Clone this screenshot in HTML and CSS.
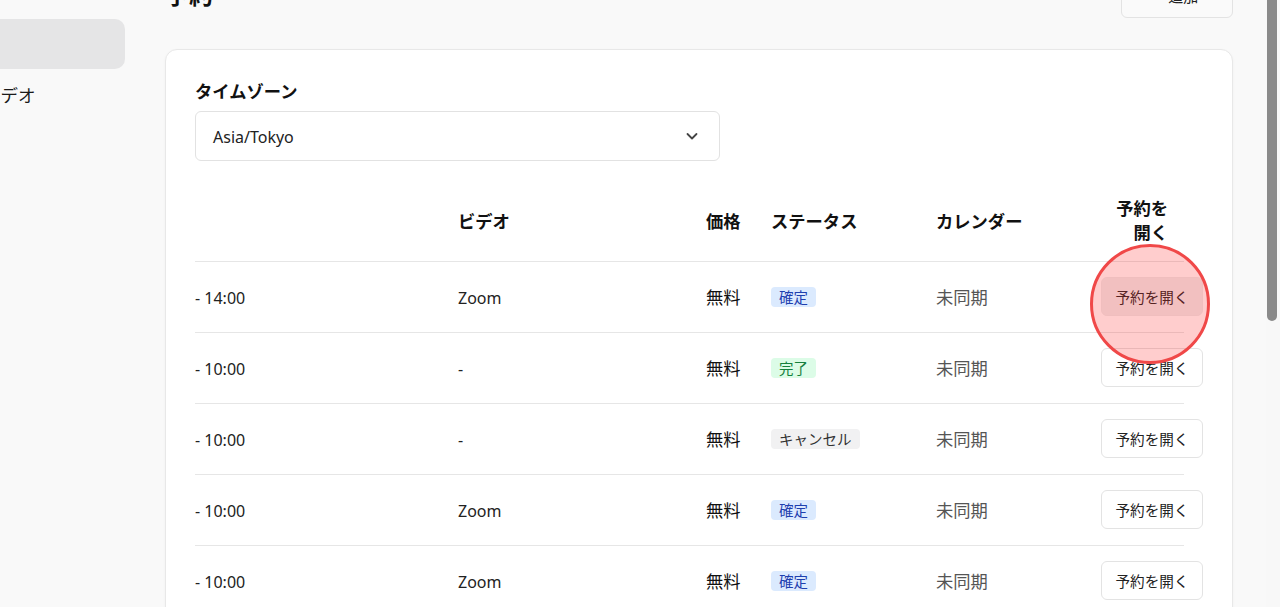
FILE: index.html
```html
<!DOCTYPE html>
<html lang="ja">
<head>
<meta charset="utf-8">
<title>予約</title>
<link rel="stylesheet" href="styles.css">
</head>
<body>
<div class="app">
  <aside class="sidebar">
    <div class="nav-item active">予約</div>
    <div class="nav-item">ビデオ</div>
  </aside>
  <main class="main">
    <header class="page-header">
      <h1 class="title">予約</h1>
      <button class="top-btn">+ 追加</button>
    </header>
    <section class="card">
      <label class="field-label">タイムゾーン</label>
      <div class="select">
        <span class="latin">Asia/Tokyo</span>
        <svg class="chevron" width="14" height="14" viewBox="0 0 14 14"><path d="M2.5 5l4.5 4.5L11.5 5" fill="none" stroke="#444" stroke-width="1.8" stroke-linecap="round" stroke-linejoin="round"/></svg>
      </div>
      <table class="table">
        <colgroup>
          <col class="c-time"><col class="c-video"><col class="c-price"><col class="c-status"><col class="c-cal"><col class="c-act">
        </colgroup>
        <thead>
          <tr>
            <th></th><th>ビデオ</th><th>価格</th><th>ステータス</th><th>カレンダー</th><th class="th-act">予約を<br>開く</th>
          </tr>
        </thead>
        <tbody>
          <tr>
            <td class="latin">- 14:00</td><td class="latin">Zoom</td><td class="price">無料</td>
            <td><span class="badge blue">確定</span></td><td class="cal">未同期</td>
            <td class="act"><span class="btn-wrap"><button class="open-btn hover">予約を開く</button><span class="highlight"></span></span></td>
          </tr>
          <tr>
            <td class="latin">- 10:00</td><td class="latin">-</td><td class="price">無料</td>
            <td><span class="badge green">完了</span></td><td class="cal">未同期</td>
            <td class="act"><button class="open-btn">予約を開く</button></td>
          </tr>
          <tr>
            <td class="latin">- 10:00</td><td class="latin">-</td><td class="price">無料</td>
            <td><span class="badge gray">キャンセル</span></td><td class="cal">未同期</td>
            <td class="act"><button class="open-btn">予約を開く</button></td>
          </tr>
          <tr>
            <td class="latin">- 10:00</td><td class="latin">Zoom</td><td class="price">無料</td>
            <td><span class="badge blue">確定</span></td><td class="cal">未同期</td>
            <td class="act"><button class="open-btn">予約を開く</button></td>
          </tr>
          <tr>
            <td class="latin">- 10:00</td><td class="latin">Zoom</td><td class="price">無料</td>
            <td><span class="badge blue">確定</span></td><td class="cal">未同期</td>
            <td class="act"><button class="open-btn">予約を開く</button></td>
          </tr>
        </tbody>
      </table>
    </section>
  </main>
  <div class="scrollbar"><div class="thumb"></div></div>
</div>
</body>
</html>
```

FILE: styles.css
```css
* { box-sizing: border-box; }
html, body { margin: 0; padding: 0; height: 100%; overflow: hidden; }
body {
  background: #f9f9f9;
  font-family: "Noto Sans", "Noto Sans CJK JP", sans-serif;
  font-size: 17.3px;
  color: #111;
}
.app {
  display: flex;
  height: 607px;
  overflow: hidden;
}
.sidebar {
  flex: 0 0 145px;
  margin-left: -20px;
  padding-top: 19px;
  display: flex;
  flex-direction: column;
  gap: 0;
}
.nav-item {
  height: 50px;
  padding-left: 3px;
  display: flex;
  align-items: center;
  font-size: 17.5px;
  border-radius: 10px;
  color: #1a1a1a;
}
.nav-item.active { background: #e5e5e6; color: transparent; }
.main {
  flex: 1;
  padding: 0 33px 0 40px;
  min-width: 0;
}
.page-header {
  margin-top: -20px;
  height: 38px;
  display: flex;
  justify-content: space-between;
  align-items: center;
  margin-bottom: 31px;
}
.title {
  margin: -8px 0 0 0;
  font-size: 24px;
  font-weight: 700;
  line-height: 32px;
}
.top-btn {
  width: 112px;
  height: 38px;
  background: #fafafa;
  border: 1px solid #e3e3e3;
  border-radius: 6px;
  font-family: inherit;
  font-size: 15px;
  color: #222;
  padding: 0 0 8px 0;
}
.card {
  background: #fff;
  border: 1px solid #e8e8e8;
  border-radius: 12px;
  box-shadow: 0 1px 3px rgba(0,0,0,0.04);
  padding: 30px 29px 40px 29px;
  min-height: 700px;
}
.field-label {
  display: block;
  font-weight: 700;
  line-height: 24px;
  margin-bottom: 7px;
}
.select {
  width: 525px;
  height: 50px;
  border: 1px solid #e2e2e2;
  border-radius: 6px;
  display: flex;
  align-items: center;
  justify-content: space-between;
  padding: 2px 20px 0 17px;
}
.latin {
  font-size: 16px;
  color: #222;
}
.chevron { display: block; margin-top: -2px; }
.table {
  margin-top: 23px;
  width: 989px;
  border-collapse: collapse;
  table-layout: fixed;
}
.c-time { width: 263px; }
.c-video { width: 248px; }
.c-price { width: 65px; }
.c-status { width: 165px; }
.c-cal { width: 165px; }
.c-act { width: 83px; }
th {
  height: 77px;
  text-align: left;
  font-weight: 700;
  line-height: 24px;
  padding: 0;
  border-bottom: 1px solid #e6e6e6;
  vertical-align: middle;
}
th.th-act { text-align: right; padding-right: 16px; padding-bottom: 2px; }
td {
  height: 71px;
  padding: 0;
  border-bottom: 1px solid #e6e6e6;
  vertical-align: middle;
  white-space: nowrap;
}
td.latin { padding-top: 2px; }
.price { color: #111; }
.cal { color: #555; }
.badge {
  display: inline-block;
  font-size: 14.5px;
  line-height: 20px;
  padding: 0 8px;
  border-radius: 4px;
  vertical-align: middle;
  margin-top: -2px;
}
.badge.blue { background: #dbeafe; color: #1e40af; }
.badge.green { background: #dcfce7; color: #15803d; }
.badge.gray { background: #f1f1f2; color: #333; }
.btn-wrap { position: relative; display: inline-block; }
.open-btn {
  height: 39px;
  width: 102px;
  background: #fff;
  border: 1px solid #e3e3e3;
  border-radius: 6px;
  font-family: inherit;
  font-size: 14.6px;
  color: #222;
  padding: 0;
  display: block;
}
.open-btn.hover { background: #efefef; border-color: #ececec; }
.highlight {
  position: absolute;
  left: -11px;
  top: -33px;
  width: 120px;
  height: 120px;
  border-radius: 50%;
  border: 3px solid #f04848;
  background: rgba(255, 40, 40, 0.23);
  pointer-events: none;
}
.scrollbar {
  flex: 0 0 14px;
  background: #f8f8f8;
  padding-left: 1px;
}
.thumb {
  width: 10px;
  height: 321px;
  background: #8a8a8a;
  border-radius: 0 0 6px 6px;
}
```
